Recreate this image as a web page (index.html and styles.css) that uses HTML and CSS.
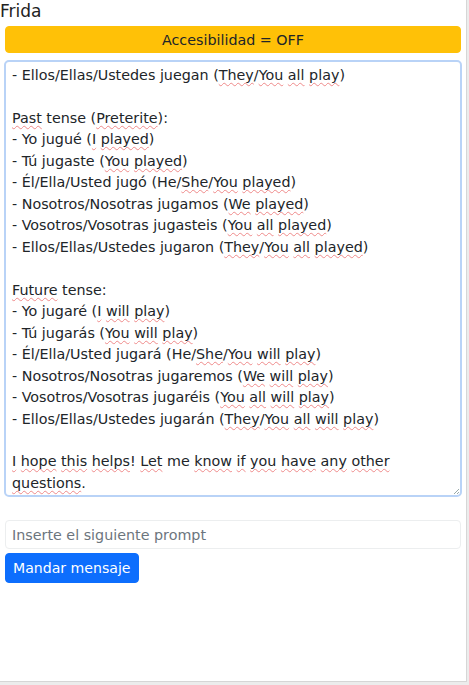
FILE: index.html
```html
<!DOCTYPE html>
<html lang="es">
<head>
<meta charset="utf-8">
<title>Frida</title>
<link rel="stylesheet" href="styles.css">
</head>
<body>
<div class="frame">
  <div class="title">Frida</div>
  <div class="wrap">
    <button class="btn btn-warning">Accesibilidad = OFF</button>
    <div class="chat" tabindex="0">
      <div class="line">- Ellos/Ellas/Ustedes juegan (<span class="sp">They</span>/<span class="sp">You</span> <span class="sp">all</span> <span class="sp">play</span>)</div>
      <div class="line">&nbsp;</div>
      <div class="line"><span class="sp">Past</span> tense (<span class="sp">Preterite</span>):</div>
      <div class="line">- Yo jugué (<span class="sp">I</span> <span class="sp">played</span>)</div>
      <div class="line">- Tú jugaste (<span class="sp">You</span> <span class="sp">played</span>)</div>
      <div class="line">- Él/Ella/Usted jugó (He/<span class="sp">She</span>/<span class="sp">You</span> <span class="sp">played</span>)</div>
      <div class="line">- Nosotros/Nosotras jugamos (<span class="sp">We</span> <span class="sp">played</span>)</div>
      <div class="line">- Vosotros/Vosotras jugasteis (<span class="sp">You</span> <span class="sp">all</span> <span class="sp">played</span>)</div>
      <div class="line">- Ellos/Ellas/Ustedes jugaron (<span class="sp">They</span>/<span class="sp">You</span> <span class="sp">all</span> <span class="sp">played</span>)</div>
      <div class="line">&nbsp;</div>
      <div class="line"><span class="sp">Future</span> tense:</div>
      <div class="line">- Yo jugaré (<span class="sp">I</span> <span class="sp">will</span> <span class="sp">play</span>)</div>
      <div class="line">- Tú jugarás (<span class="sp">You</span> <span class="sp">will</span> <span class="sp">play</span>)</div>
      <div class="line">- Él/Ella/Usted jugará (He/<span class="sp">She</span>/<span class="sp">You</span> <span class="sp">will</span> <span class="sp">play</span>)</div>
      <div class="line">- Nosotros/Nosotras jugaremos (<span class="sp">We</span> <span class="sp">will</span> <span class="sp">play</span>)</div>
      <div class="line">- Vosotros/Vosotras jugaréis (<span class="sp">You</span> <span class="sp">all</span> <span class="sp">will</span> <span class="sp">play</span>)</div>
      <div class="line">- Ellos/Ellas/Ustedes jugarán (<span class="sp">They</span>/<span class="sp">You</span> <span class="sp">all</span> <span class="sp">will</span> <span class="sp">play</span>)</div>
      <div class="line">&nbsp;</div>
      <div class="line"><span class="sp">I</span> <span class="sp">hope</span> <span class="sp">this</span> <span class="sp">helps</span>! <span class="sp">Let</span> me <span class="sp">know</span> <span class="sp">if</span> <span class="sp">you</span> <span class="sp">have</span> <span class="sp">any</span> <span class="sp">other</span> <span class="sp">questions</span>.</div>
      <span class="grip"></span>
    </div>
    <input class="prompt" type="text" placeholder="Inserte el siguiente prompt">
    <div class="actions">
      <button class="btn btn-primary">Mandar mensaje</button>
    </div>
  </div>
</div>
</body>
</html>
```

FILE: styles.css
```css
html {
  background: #ececec;
}
body {
  margin: 0;
  font-family: "DejaVu Sans", "Liberation Sans", sans-serif;
  color: #212529;
}
.frame {
  width: 466px;
  height: 681px;
  background: #fff;
  border-right: 1px solid #d6d6d6;
  border-bottom: 1px solid #d6d6d6;
  box-sizing: content-box;
}
.title {
  font-size: 17px;
  line-height: 22px;
  color: #222;
}
.wrap {
  padding: 4px 4px 0 4px;
  display: flex;
  flex-direction: column;
}
.btn {
  font-family: "DejaVu Sans", "Liberation Sans", sans-serif;
  font-size: 14.3px;
  border: 1px solid transparent;
  border-radius: 4px;
  cursor: pointer;
}
.btn-warning {
  margin: 0 1px;
  height: 27px;
  background: #ffc107;
  border-color: #ffc107;
  color: #212529;
  padding: 0;
}
.chat {
  position: relative;
  margin-top: 7px;
  height: 437px;
  box-sizing: border-box;
  border: 2px solid #b9d3f7;
  border-radius: 5px;
  padding: 3px 60px 0 6px;
  font-size: 14.3px;
  line-height: 21.47px;
  color: #212529;
  overflow: hidden;
  outline: none;
}
.line {
  white-space: normal;
}
.sp {
  text-decoration: underline wavy #ef8a8a;
  text-decoration-thickness: 1px;
  text-underline-offset: 2px;
  text-decoration-skip-ink: none;
}
.grip {
  position: absolute;
  right: 1px;
  bottom: 1px;
  width: 5px;
  height: 5px;
  background: linear-gradient(135deg, transparent 45%, #9aa 50%, transparent 60%, transparent 75%, #9aa 80%, transparent 90%);
}
.prompt {
  margin: 23px 1px 0 1px;
  height: 29px;
  box-sizing: border-box;
  border: 1px solid #eceeef;
  border-radius: 4px;
  padding: 0 6px;
  font-family: "DejaVu Sans", "Liberation Sans", sans-serif;
  font-size: 14.3px;
  color: #212529;
  outline: none;
}
.prompt::placeholder {
  color: #6c757d;
}
.actions {
  display: flex;
  margin: 4px 1px 0 1px;
}
.btn-primary {
  height: 30px;
  padding: 0 7px;
  background: #0d6efd;
  border-color: #0d6efd;
  color: #fff;
  font-size: 14.1px;
}
```
